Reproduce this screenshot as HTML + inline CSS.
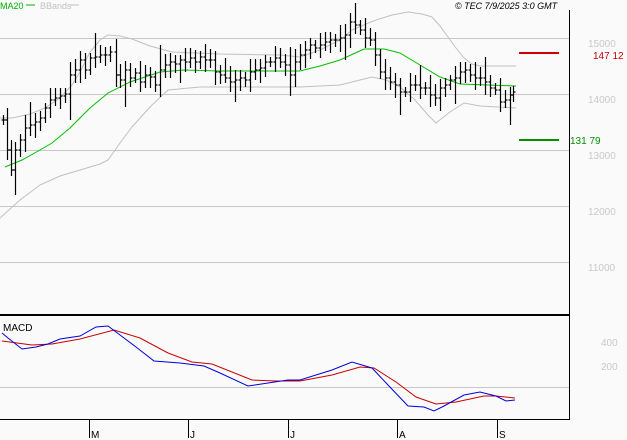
<!DOCTYPE html>
<html><head><meta charset="utf-8"><style>
html,body{margin:0;padding:0;background:#fafafa;}
svg{display:block;font-family:"Liberation Sans",sans-serif;}
</style></head><body>
<svg id="s" width="627" height="440" xmlns="http://www.w3.org/2000/svg">
<rect width="627" height="440" fill="#fafafa"/>
<g stroke="#c8c8c8" stroke-width="1">
<line x1="0" y1="38.5" x2="569" y2="38.5"/><line x1="0" y1="94.5" x2="569" y2="94.5"/>
<line x1="0" y1="150.5" x2="569" y2="150.5"/><line x1="0" y1="206.5" x2="569" y2="206.5"/>
<line x1="0" y1="262.5" x2="569" y2="262.5"/><line x1="0" y1="387.5" x2="569" y2="387.5"/>
</g>
<g fill="#c8c8c8" font-size="10">
<text x="588" y="47">15000</text><text x="588" y="103">14000</text><text x="588" y="159">13000</text>
<text x="588" y="215">12000</text><text x="588" y="271">11000</text>
<text x="601" y="346">400</text><text x="601" y="370">200</text>
</g>
<polyline fill="none" stroke="#c0c0c0" points="0,118 12,118 30,114 45,108 60,98 72,85 80,72 90,52 100,40 108,35 120,36 132,39 150,46 172,52 220,54 280,55 300,57 320,50 340,40 352,30 366,24 376,20 392,15 408,12 422,14 432,17 440,26 448,37 456,48 464,58 472,64 480,66 516,66"/>
<polyline fill="none" stroke="#c0c0c0" points="0,218 20,200 40,185 60,176 80,170 100,164 108,160 120,143 132,127 150,107 168,90 200,87 300,87 340,85 360,80 372,77 386,80 400,87 415,100 428,115 436,123 450,112 464,103 480,106 516,108"/>
<polyline fill="none" stroke="#00c000" points="5,167 22,160 40,150 52,143 70,128 90,108 108,93 130,82 160,72 184,70 220,71 300,71 320,66 340,60 364,49 384,49 400,53 420,65 440,77 460,84 516,86"/>
<g id="bars" stroke="#000" stroke-width="1.2"></g>
<line x1="519" y1="53" x2="559" y2="53" stroke="#cc0000" stroke-width="2"/>
<text x="593" y="59" fill="#cc0000" font-size="10">147 12</text>
<line x1="519" y1="140" x2="559" y2="140" stroke="#009000" stroke-width="2"/>
<text x="570" y="144" fill="#009000" font-size="10">131 79</text>
<line x1="569.5" y1="10" x2="569.5" y2="420" stroke="#000"/>
<line x1="0" y1="315" x2="569" y2="315" stroke="#000" stroke-width="2"/>
<line x1="0" y1="419.5" x2="570" y2="419.5" stroke="#000"/>
<text x="3" y="331" font-size="10" fill="#000">MACD</text>
<polyline fill="none" stroke="#cc0000" points="2,341 32,345 52,344 80,339 114,330 140,338 168,353 192,362 212,364 252,380 276,381 300,381 332,375 360,367 374,368 396,382 416,397 436,404 456,402 484,396 496,396 515,398"/>
<polyline fill="none" stroke="#0000dd" points="2,333 8,338 22,349 36,347 48,344 60,339 80,336 96,327 108,326 120,335 136,347 154,361 180,363 204,366 220,373 248,386 268,383 288,380 300,380 332,370 352,362 372,368 388,385 408,406 424,407 434,411 444,406 464,395 480,392 496,396 506,401 515,400"/>
<g stroke="#000"><line x1="89.5" y1="419" x2="89.5" y2="438"/><line x1="188.5" y1="419" x2="188.5" y2="438"/><line x1="288.5" y1="419" x2="288.5" y2="438"/><line x1="397.5" y1="419" x2="397.5" y2="438"/><line x1="497.5" y1="419" x2="497.5" y2="438"/></g>
<g font-size="10" fill="#000"><text x="91" y="438">M</text><text x="190" y="438">J</text><text x="290" y="438">J</text><text x="399" y="438">A</text><text x="499" y="438">S</text></g>
<text x="0" y="9" font-size="9" fill="#00b000">MA20</text>
<line x1="26" y1="5" x2="35" y2="5" stroke="#00b000"/>
<text x="40" y="9" font-size="9" fill="#c0c0c0">BBands</text>
<line x1="70" y1="5" x2="79" y2="5" stroke="#c0c0c0"/>
<text x="455" y="9" font-size="9" font-style="italic" fill="#000">© TEC 7/9/2025 3:0 GMT</text>
</svg>
<script>
var c=[[3,120],[7,150],[11,170],[15,150],[20,140],[25,128],[30,125],[35,122],[40,118],[45,108],[50,100],[55,98],[60,96],[65,94],[70,75],[75,70],[80,60],[85,70],[90,58],[95,57],[100,55],[105,55],[110,52],[116,75],[120,80],[125,70],[130,78],[135,73],[140,82],[145,75],[150,77],[155,85],[160,70],[165,65],[170,62],[175,64],[180,60],[185,62],[190,58],[195,62],[200,57],[205,60],[210,60],[215,72],[220,75],[225,78],[230,82],[235,80],[240,78],[245,80],[250,72],[255,70],[260,68],[265,62],[270,62],[275,58],[280,62],[285,65],[290,75],[295,62],[300,55],[305,50],[310,45],[315,48],[320,45],[325,42],[330,40],[335,40],[340,38],[345,35],[350,22],[355,25],[360,30],[365,38],[370,40],[375,55],[380,72],[385,78],[390,82],[395,85],[400,92],[405,92],[410,85],[415,85],[420,88],[425,88],[430,95],[435,98],[440,88],[445,85],[450,80],[455,78],[460,72],[465,70],[470,75],[475,78],[480,78],[485,82],[490,88],[495,90],[500,102],[505,100],[510,95],[513,92]];
var g=document.getElementById('bars'),h='',p=c[0][1];
for(var i=0;i<c.length;i++){var x=c[i][0]+.5,y=c[i][1],hi=Math.min(p,y)-5-(i*7%9),lo=Math.max(p,y)+5+(i*5%9);
if(i%11==3)lo+=14;if(i%13==6)hi-=12;
h+='<line x1="'+x+'" y1="'+hi+'" x2="'+x+'" y2="'+lo+'"/><line x1="'+(x-2)+'" y1="'+p+'" x2="'+x+'" y2="'+p+'"/><line x1="'+x+'" y1="'+y+'" x2="'+(x+2)+'" y2="'+y+'"/>';p=y;}
g.innerHTML=h;
</script>
</body></html>
